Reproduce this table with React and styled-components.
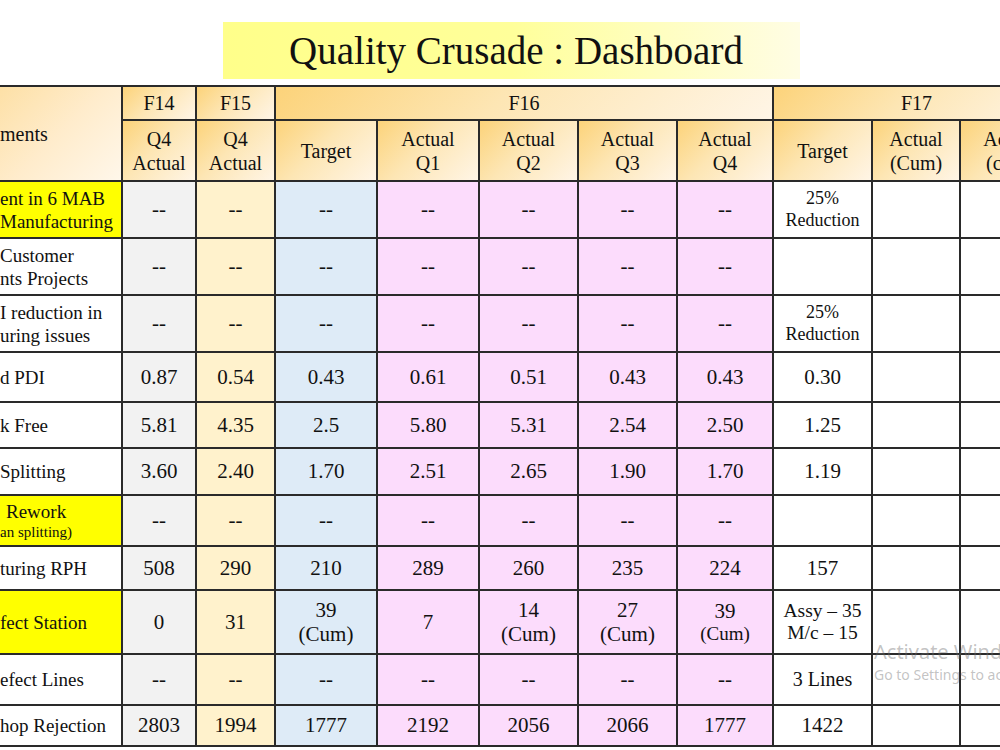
import React from 'react';
import styled, { createGlobalStyle } from 'styled-components';

const GlobalStyle = createGlobalStyle`
  html, body { margin: 0; padding: 0; background: #fff; overflow: hidden; }
  #root { width: 1000px; height: 750px; }
`;

const LINE = '#2a2a2a';

const tones = {
  label: '#ffffff',
  yellow: '#ffff00',
  grey: '#f2f2f2',
  orange: '#fff2cc',
  blue: '#deebf7',
  pink: '#fcdcfc',
  white: '#ffffff',
};

const Page = styled.div`
  position: relative;
  width: 1000px;
  height: 750px;
  overflow: hidden;
  font-family: "Liberation Serif", "Times New Roman", serif;
  color: #111;
`;

const TitleRow = styled.header`
  display: flex;
  padding: 22px 0 0 223px;
  margin-bottom: 6px;
`;

const TitleBox = styled.h1`
  margin: 0;
  width: 577px;
  height: 57px;
  box-sizing: border-box;
  display: flex;
  align-items: center;
  justify-content: center;
  padding-left: 9px;
  background: linear-gradient(90deg, #ffff8a 0%, #ffff9a 50%, #fffde4 100%);
  font-weight: 400;
  font-size: 39px;
  line-height: 1;
`;

const Grid = styled.div`
  display: grid;
  grid-template-columns: 123px 74px 79px 102px 102px 99px 99px 96px 99px 88px 100px;
  grid-template-rows: 34px 61px 57px 57px 57px 50px 46px 47px 51px 44px 64px 51px 41px;
  width: max-content;
  border-top: 2px solid ${LINE};
`;

const Cell = styled.div`
  box-sizing: border-box;
  border-right: 2px solid ${LINE};
  border-bottom: 2px solid ${LINE};
  display: flex;
  flex-direction: column;
  align-items: center;
  justify-content: center;
  text-align: center;
  white-space: nowrap;
  overflow: hidden;
  background: ${p => tones[p.$tone] || '#fff'};
  font-size: 21px;
  line-height: 1.15;
  grid-column: span ${p => p.$span || 1};
  grid-row: span ${p => p.$rows || 1};
`;

const HeadCell = styled(Cell)`
  font-size: 20px;
  line-height: 1.2;
  align-items: ${p => (p.$first ? 'flex-start' : 'center')};
  background: ${p =>
    p.$first
      ? 'linear-gradient(135deg, #fde0a6 0%, #ffeccc 50%, #fff7ea 100%)'
      : 'linear-gradient(135deg, #fcd37a 0%, #fde6b4 45%, #fff5e6 100%)'};
`;

const LabelCell = styled(Cell)`
  align-items: flex-start;
  text-align: left;
  font-size: 19px;
  line-height: 1.2;
  padding-top: 2px;
`;

const Line = styled.span`
  display: block;
  font-size: ${p => (p.$size ? `${p.$size}px` : 'inherit')};
  line-height: ${p => (p.$lh ? p.$lh : 'inherit')};
  padding-left: ${p => (p.$indent ? `${p.$indent}px` : '0')};
`;

const Watermark = styled.div`
  position: absolute;
  left: 874px;
  top: 637px;
  font-family: "Noto Sans", "Open Sans", sans-serif;
  color: rgba(110, 110, 110, 0.42);
  pointer-events: none;
  white-space: nowrap;
`;

const WaterTitle = styled.div`
  font-size: 20px;
  line-height: 29px;
`;

const WaterSub = styled.div`
  font-size: 14px;
  line-height: 18px;
`;

const colTones = ['grey', 'orange', 'blue', 'pink', 'pink', 'pink', 'pink', 'white', 'white', 'white'];

const labels = [
  { tone: 'yellow', lines: [{ t: 'ent in 6 MAB' }, { t: 'Manufacturing' }] },
  { tone: 'label', lines: [{ t: 'Customer' }, { t: 'nts Projects' }] },
  { tone: 'label', lines: [{ t: 'I reduction in' }, { t: 'uring issues' }] },
  { tone: 'label', lines: [{ t: 'd PDI' }] },
  { tone: 'label', lines: [{ t: 'k Free' }] },
  { tone: 'label', lines: [{ t: 'Splitting' }] },
  { tone: 'yellow', lines: [{ t: 'Rework', indent: 6 }, { t: 'an splitting)', s: 15 }] },
  { tone: 'label', lines: [{ t: 'turing RPH' }] },
  { tone: 'yellow', lines: [{ t: 'fect Station' }] },
  { tone: 'label', lines: [{ t: 'efect Lines' }] },
  { tone: 'label', lines: [{ t: 'hop Rejection' }] },
];

const D = '--';
const red = [
  { t: '25%', s: 18 },
  { t: 'Reduction', s: 18 },
];

const rows = [
  [D, D, D, D, D, D, D, red, '', ''],
  [D, D, D, D, D, D, D, '', '', ''],
  [D, D, D, D, D, D, D, red, '', ''],
  ['0.87', '0.54', '0.43', '0.61', '0.51', '0.43', '0.43', '0.30', '', ''],
  ['5.81', '4.35', '2.5', '5.80', '5.31', '2.54', '2.50', '1.25', '', ''],
  ['3.60', '2.40', '1.70', '2.51', '2.65', '1.90', '1.70', '1.19', '', ''],
  [D, D, D, D, D, D, D, '', '', ''],
  ['508', '290', '210', '289', '260', '235', '224', '157', '', ''],
  [
    '0',
    '31',
    [{ t: '39' }, { t: '(Cum)' }],
    '7',
    [{ t: '14' }, { t: '(Cum)' }],
    [{ t: '27' }, { t: '(Cum)' }],
    [{ t: '39' }, { t: '(Cum)', s: 19 }],
    [
      { t: 'Assy – 35', s: 19.5 },
      { t: 'M/c – 15', s: 19.5 },
    ],
    '',
    '',
  ],
  [D, D, D, D, D, D, D, [{ t: '3 Lines', s: 20 }], '', ''],
  ['2803', '1994', '1777', '2192', '2056', '2066', '1777', '1422', '', ''],
];

const subHeads = [
  ['Q4', 'Actual'],
  ['Q4', 'Actual'],
  ['Target'],
  ['Actual', 'Q1'],
  ['Actual', 'Q2'],
  ['Actual', 'Q3'],
  ['Actual', 'Q4'],
  ['Target'],
  ['Actual', '(Cum)'],
  ['Actual', '(cum)'],
];

function Lines({ value }) {
  if (Array.isArray(value)) {
    return value.map((l, i) => (
      <Line key={i} $size={l.s} $indent={l.indent} $lh={l.s && l.s < 19 ? 1.18 : undefined}>
        {l.t}
      </Line>
    ));
  }
  return <Line>{value}</Line>;
}

export default function App() {
  return (
    <Page>
      <GlobalStyle />
      <TitleRow>
        <TitleBox>Quality Crusade : Dashboard</TitleBox>
      </TitleRow>
      <Grid>
        <HeadCell $first $rows={2}>
          <Line>ments</Line>
        </HeadCell>
        <HeadCell>F14</HeadCell>
        <HeadCell>F15</HeadCell>
        <HeadCell $span={5}>F16</HeadCell>
        <HeadCell $span={3}>F17</HeadCell>
        {subHeads.map((h, i) => (
          <HeadCell key={`h${i}`}>
            {h.map((t, j) => (
              <Line key={j}>{t}</Line>
            ))}
          </HeadCell>
        ))}
        {rows.map((r, ri) => (
          <React.Fragment key={ri}>
            <LabelCell $tone={labels[ri].tone}>
              <Lines value={labels[ri].lines} />
            </LabelCell>
            {r.map((v, ci) => (
              <Cell key={ci} $tone={colTones[ci]}>
                <Lines value={v} />
              </Cell>
            ))}
          </React.Fragment>
        ))}
      </Grid>
      <Watermark>
        <WaterTitle>Activate Windows</WaterTitle>
        <WaterSub>Go to Settings to activate Windows.</WaterSub>
      </Watermark>
    </Page>
  );
}
